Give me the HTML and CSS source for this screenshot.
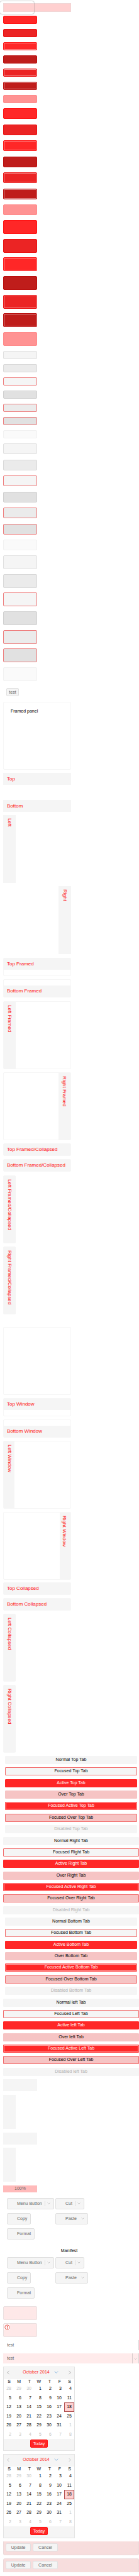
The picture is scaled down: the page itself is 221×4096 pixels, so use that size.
FILE: index.html
```html
<!DOCTYPE html>
<html lang="en">
<head>
<meta charset="utf-8">
<title>Theme widgets</title>
<link rel="stylesheet" href="styles.css">
</head>
<body>
<svg class="defs" aria-hidden="true">
  <symbol id="down" viewBox="0 0 10 6"><path d="M1 1l4 4 4-4" fill="none" stroke="currentColor" stroke-width="1.4"/></symbol>
  <symbol id="prev" viewBox="0 0 8 12"><path d="M7 1L1 6l6 5" fill="none" stroke="currentColor" stroke-width="1.4"/></symbol>
  <symbol id="next" viewBox="0 0 8 12"><path d="M1 1l6 5-6 5" fill="none" stroke="currentColor" stroke-width="1.4"/></symbol>
</svg>
<main class="page">
  <div class="highlight"><div class="halo"></div></div>

  <div class="stack small">
    <button class="btn red" aria-label="Normal"></button>
    <button class="btn red over" aria-label="Over"></button>
    <button class="btn red focus" aria-label="Focused"></button>
    <button class="btn red pressed" aria-label="Pressed"></button>
    <button class="btn red over focus" aria-label="Focused over"></button>
    <button class="btn red pressed focus" aria-label="Focused pressed"></button>
    <button class="btn red off" aria-label="Disabled" disabled></button>
  </div>
  <div class="stack medium">
    <button class="btn red" aria-label="Normal"></button>
    <button class="btn red over" aria-label="Over"></button>
    <button class="btn red focus" aria-label="Focused"></button>
    <button class="btn red pressed" aria-label="Pressed"></button>
    <button class="btn red over focus" aria-label="Focused over"></button>
    <button class="btn red pressed focus" aria-label="Focused pressed"></button>
    <button class="btn red off" aria-label="Disabled" disabled></button>
  </div>
  <div class="stack large">
    <button class="btn red" aria-label="Normal"></button>
    <button class="btn red over" aria-label="Over"></button>
    <button class="btn red focus" aria-label="Focused"></button>
    <button class="btn red pressed" aria-label="Pressed"></button>
    <button class="btn red over focus" aria-label="Focused over"></button>
    <button class="btn red pressed focus" aria-label="Focused pressed"></button>
    <button class="btn red off" aria-label="Disabled" disabled></button>
  </div>
  <div class="stack small">
    <button class="btn grey" aria-label="Normal"></button>
    <button class="btn grey over" aria-label="Over"></button>
    <button class="btn grey focus" aria-label="Focused"></button>
    <button class="btn grey pressed" aria-label="Pressed"></button>
    <button class="btn grey over focus" aria-label="Focused over"></button>
    <button class="btn grey pressed focus" aria-label="Focused pressed"></button>
    <button class="btn grey off" aria-label="Disabled" disabled></button>
  </div>
  <div class="stack medium">
    <button class="btn grey" aria-label="Normal"></button>
    <button class="btn grey over" aria-label="Over"></button>
    <button class="btn grey focus" aria-label="Focused"></button>
    <button class="btn grey pressed" aria-label="Pressed"></button>
    <button class="btn grey over focus" aria-label="Focused over"></button>
    <button class="btn grey pressed focus" aria-label="Focused pressed"></button>
    <button class="btn grey off" aria-label="Disabled" disabled></button>
  </div>
  <div class="stack large">
    <button class="btn grey" aria-label="Normal"></button>
    <button class="btn grey over" aria-label="Over"></button>
    <button class="btn grey focus" aria-label="Focused"></button>
    <button class="btn grey pressed" aria-label="Pressed"></button>
    <button class="btn grey over focus" aria-label="Focused over"></button>
    <button class="btn grey pressed focus" aria-label="Focused pressed"></button>
    <button class="btn grey off" aria-label="Disabled" disabled></button>
  </div>

  <button class="btn grey test">test</button>

  <section class="panels plain">
    <div class="panel framed tall note">Framed panel</div>
    <div class="panel top"><h2 class="bar">Top</h2><div class="body"></div></div>
    <div class="panel"><h2 class="bar">Bottom</h2></div>
    <div class="panel side tall"><h2 class="bar">Left</h2></div>
    <div class="panel side right tall"><h2 class="bar">Right</h2></div>
  </section>

  <section class="panels frames">
    <div class="panel framed short"><h2 class="bar">Top Framed</h2></div>
    <div class="panel framed short bottom"><h2 class="bar">Bottom Framed</h2></div>
    <div class="panel framed side tall"><h2 class="bar">Left Framed</h2></div>
    <div class="panel framed side right tall"><h2 class="bar">Right Framed</h2></div>
    <div class="panel framed"><h2 class="bar">Top Framed/Collapsed</h2></div>
    <div class="panel framed"><h2 class="bar">Bottom Framed/Collapsed</h2></div>
    <div class="panel framed side tall collapsed"><h2 class="bar">Left Framed/Collapsed</h2></div>
    <div class="panel framed side tall collapsed"><h2 class="bar">Right Framed/Collapsed</h2></div>
  </section>

  <section class="panels windows">
    <div class="panel framed tall"></div>
    <div class="panel framed short window"><h2 class="bar">Top Window</h2></div>
    <div class="panel framed short window bottom"><h2 class="bar">Bottom Window</h2></div>
    <div class="panel framed side tall window"><h2 class="bar">Left Window</h2></div>
    <div class="panel framed side right tall window"><h2 class="bar">Right Window</h2></div>
    <div class="panel framed"><h2 class="bar">Top Collapsed</h2></div>
    <div class="panel framed"><h2 class="bar">Bottom Collapsed</h2></div>
    <div class="panel framed side tall collapsed"><h2 class="bar">Left Collapsed</h2></div>
    <div class="panel framed side tall collapsed"><h2 class="bar">Right Collapsed</h2></div>
  </section>

  <section class="tabs">
    <button class="tab inset">Normal Top Tab</button>
    <button class="tab inset focus">Focused Top Tab</button>
    <button class="tab inset active">Active Top Tab</button>
    <button class="tab inset over">Over Top Tab</button>
    <button class="tab inset active focus">Focused Active Top Tab</button>
    <button class="tab inset over focus">Focused Over Top Tab</button>
    <button class="tab inset" disabled>Disabled Top Tab</button>
    <button class="tab">Normal Right Tab</button>
    <button class="tab focus">Focused Right Tab</button>
    <button class="tab active">Active Right Tab</button>
    <button class="tab over">Over Right Tab</button>
    <button class="tab active focus">Focused Active Right Tab</button>
    <button class="tab over focus">Focused Over Right Tab</button>
    <button class="tab" disabled>Disabled Right Tab</button>
    <button class="tab inset">Normal Bottom Tab</button>
    <button class="tab inset focus">Focused Bottom Tab</button>
    <button class="tab inset active">Active Bottom Tab</button>
    <button class="tab inset over">Over Bottom Tab</button>
    <button class="tab inset active focus">Focused Active Bottom Tab</button>
    <button class="tab inset over focus">Focused Over Bottom Tab</button>
    <button class="tab inset" disabled>Disabled Bottom Tab</button>
    <button class="tab">Normal left Tab</button>
    <button class="tab focus">Focused Left Tab</button>
    <button class="tab active">Active left Tab</button>
    <button class="tab over">Over left Tab</button>
    <button class="tab active focus">Focused Active Left Tab</button>
    <button class="tab over focus">Focused Over Left Tab</button>
    <button class="tab" disabled>Disabled left Tab</button>
  </section>

  <section class="strips">
    <div class="strip"></div>
    <div class="strip upright"></div>
    <div class="strip"></div>
    <div class="strip upright"></div>
    <div class="progress" role="progressbar" aria-valuenow="100">100%</div>
  </section>

  <section class="toolbar">
    <button class="btn grey tool">Menu Button<span class="split"></span><svg class="chev"><use href="#down"/></svg></button>
    <button class="btn grey tool">Cut<span class="split"></span><svg class="chev"><use href="#down"/></svg></button>
    <button class="btn grey tool">Copy</button>
    <button class="btn grey tool">Paste<svg class="chev lone"><use href="#down"/></svg></button>
    <button class="btn grey tool">Format</button>
  </section>
  <h3 class="caption">Manifest</h3>
  <section class="toolbar">
    <button class="btn grey tool">Menu Button<span class="split"></span><svg class="chev"><use href="#down"/></svg></button>
    <button class="btn grey tool">Cut<span class="split"></span><svg class="chev"><use href="#down"/></svg></button>
    <button class="btn grey tool">Copy</button>
    <button class="btn grey tool">Paste<svg class="chev lone"><use href="#down"/></svg></button>
    <button class="btn grey tool">Format</button>
  </section>

  <section class="forms">
    <div class="tip"></div>
    <div class="tip">
      <svg class="alert" viewBox="0 0 16 16"><path fill="#fff" d="M0 0h16v16H0z"/><circle cx="8" cy="8" r="6.5" fill="none" stroke="#e0281c" stroke-width="1.3"/><path d="M8 4v5M8 10.500v1.500" stroke="#e0281c" stroke-width="2"/></svg>
    </div>
    <div class="combo"><input type="text" value="test" aria-label="Plain field"></div>
    <div class="combo tinted"><input type="text" value="test" aria-label="Combo field"><button class="trigger" aria-label="Open"><svg class="chev"><use href="#down"/></svg></button></div>

    <div class="picker">
      <div class="month"><button class="arrow" aria-label="Previous"><svg><use href="#prev"/></svg></button><button class="name">October 2014<svg class="chev"><use href="#down"/></svg></button><button class="arrow" aria-label="Next"><svg><use href="#next"/></svg></button></div>
      <table>
        <thead><tr><th>S</th><th>M</th><th>T</th><th>W</th><th>T</th><th>F</th><th>S</th></tr></thead>
        <tbody>
        <tr><td class="dim">28</td><td class="dim">29</td><td class="dim">30</td><td>1</td><td>2</td><td>3</td><td>4</td></tr>
        <tr><td>5</td><td>6</td><td>7</td><td>8</td><td>9</td><td>10</td><td>11</td></tr>
        <tr><td>12</td><td>13</td><td>14</td><td>15</td><td>16</td><td>17</td><td class="today">18</td></tr>
        <tr><td>19</td><td>20</td><td>21</td><td>22</td><td>23</td><td>24</td><td>25</td></tr>
        <tr><td>26</td><td>27</td><td>28</td><td>29</td><td>30</td><td>31</td><td class="dim">1</td></tr>
        <tr><td class="dim">2</td><td class="dim">3</td><td class="dim">4</td><td class="dim">5</td><td class="dim">6</td><td class="dim">7</td><td class="dim">8</td></tr>
        </tbody>
      </table>
      <div class="foot"><button class="btn red now">Today</button></div>
    </div>
    <div class="picker faded">
      <div class="month"><button class="arrow" aria-label="Previous"><svg><use href="#prev"/></svg></button><button class="name">October 2014<svg class="chev"><use href="#down"/></svg></button><button class="arrow" aria-label="Next"><svg><use href="#next"/></svg></button></div>
      <table>
        <thead><tr><th>S</th><th>M</th><th>T</th><th>W</th><th>T</th><th>F</th><th>S</th></tr></thead>
        <tbody>
        <tr><td class="dim">28</td><td class="dim">29</td><td class="dim">30</td><td>1</td><td>2</td><td>3</td><td>4</td></tr>
        <tr><td>5</td><td>6</td><td>7</td><td>8</td><td>9</td><td>10</td><td>11</td></tr>
        <tr><td>12</td><td>13</td><td>14</td><td>15</td><td>16</td><td>17</td><td class="today">18</td></tr>
        <tr><td>19</td><td>20</td><td>21</td><td>22</td><td>23</td><td>24</td><td>25</td></tr>
        <tr><td>26</td><td>27</td><td>28</td><td>29</td><td>30</td><td>31</td><td class="dim">1</td></tr>
        <tr><td class="dim">2</td><td class="dim">3</td><td class="dim">4</td><td class="dim">5</td><td class="dim">6</td><td class="dim">7</td><td class="dim">8</td></tr>
        </tbody>
      </table>
      <div class="foot"><button class="btn red now">Today</button></div>
    </div>

    <div class="editor below"><button class="btn grey act">Update</button><button class="btn grey act">Cancel</button></div>
    <div class="editor above"><button class="btn grey act">Update</button><button class="btn grey act">Cancel</button></div>
  </section>
</main>
</body>
</html>
```

FILE: styles.css
```css
* { box-sizing: border-box; }
body {
  margin: 0;
  background: #fff;
  color: #000;
  font: 7px/8px "Liberation Sans", Arial, sans-serif;
}
button, input { font: inherit; margin: 0; padding: 0; border: 0; background: none; color: inherit; }
button { white-space: nowrap; }
h2, h3 { margin: 0; font-weight: normal; }
.defs { display: none; }
.page { padding: 5px 0 5px 5px; }

.highlight { width: 108px; height: 14px; margin-bottom: 6px; background: #ffd0d0; border: 1px solid #f0d6d6; }
.halo {
  position: absolute;
  left: 0;
  top: 2px;
  width: 54px;
  height: 20px;
  border-radius: 3px;
  box-shadow: 0 0 2px #777;
}

/* Button states */
.btn { display: block; border: 1px solid; border-radius: 2px; }
.red { background: #ff2727; border-color: #ff1414; color: #fff; }
.red.over { background: #eb2424; border-color: #ea1212; }
.red.pressed { background: #bf1d1b; border-color: #ba0f0e; }
.red.focus { box-shadow: inset 0 0 0 1px #ff8f8f; }
.red.over.focus { box-shadow: inset 0 0 0 1px #f58c8c; }
.red.pressed.focus { box-shadow: inset 0 0 0 1px #dd8a8a; }
.red.off { background: #ff9393; border-color: #ff8a8a; }
.grey { background: #f5f5f5; border-color: #e0e0e0; color: #666; }
.grey.over { background: #ebebeb; border-color: #d9d9d9; }
.grey.pressed { background: #e1e1e1; border-color: #d0d0d0; }
.grey.focus, .grey.over.focus, .grey.pressed.focus { border-color: #ee7c7c; }
.grey.off { background: #fafafa; border-color: #f1f1f1; }

.stack { display: grid; align-content: space-between; width: 54px; margin-bottom: 8px; }
.small { height: 139px; grid-auto-rows: 13px; }
.medium { height: 170px; grid-auto-rows: 17px; }
.large { height: 200px; grid-auto-rows: 22px; }
.test { width: 20px; height: 13px; margin: 11px 0 9px 5px; line-height: 9px; }

/* Panels */
.panels { display: flex; flex-direction: column; width: 108px; }
.plain { gap: 5px; margin-bottom: 6px; }
.frames { height: 567px; justify-content: space-between; margin-bottom: 20px; }
.windows { height: 677px; justify-content: space-between; margin-bottom: 5px; }
.panel { display: flex; flex-direction: column; }
.bar { height: 19px; padding: 5px 6px; background: #f5f5f5; color: #ff1010; font-size: 8px; line-height: 9px; white-space: nowrap; }
.body { height: 19px; }
.tall { height: 108px; }
.short { height: 29px; }
.note { padding: 10px 11px; }
.framed { border: 1px solid #f6f6f6; border-radius: 2px; }
.framed .bar { height: 18px; padding: 4px 5px; }
.bottom { justify-content: flex-end; }
.side { flex-direction: row; }
.side .bar, .framed.side .bar { writing-mode: vertical-rl; width: 20px; height: auto; padding: 5px 5px 5px 6px; }
.framed.side .bar { width: 19px; padding-left: 5px; }
.window.side .bar { width: 17px; padding-right: 3px; }
.window.side.right .bar { padding: 5px 5px 5px 3px; }
.right { justify-content: flex-end; }
.collapsed { width: 20px; }

/* Tabs */
.tabs { display: grid; height: 509px; align-content: space-between; grid-auto-rows: 13px; margin-bottom: 5px; }
.tab { padding-bottom: 1px; background: #f5f5f5; border: 1px solid #f5f5f5; border-radius: 1px; line-height: 10px; }
.inset { margin: 0 3px; }
.tab.active { background: #ff2727; border-color: #ff2727; color: #fff; }
.tab.over { background: #f6c4c4; border-color: #f6c4c4; }
.tab.focus { border-color: #f26a6a; }
.tab.active.focus { border-color: #ff4a4a; box-shadow: inset 0 0 0 1px #ff9a9a; }
.tab:disabled { color: #b0b0b0; }

.strips { display: flex; flex-direction: column; justify-content: space-between; height: 180px; margin-bottom: 9px; }
.strip { width: 54px; height: 19px; background: #f5f5f5; }
.upright { width: 20px; height: 54px; }
.progress { width: 54px; height: 11px; background: #ffbaba; color: #666; text-align: center; line-height: 10px; }

/* Toolbars */
.toolbar { display: grid; grid-template-columns: 77px 1fr; grid-auto-rows: 18px; row-gap: 6px; justify-items: start; margin-left: 6px; }
.tool { display: flex; align-items: center; padding: 0 5px 1px 15px; }
.split { width: 1px; height: 8px; margin: 0 3px 0 4px; background: #ddd; }
.chev { flex: none; width: 5px; height: 3px; color: #b4b4b4; }
.lone { margin-left: 7px; }
.caption { margin: 14px 6px 6px 0; text-align: center; font-size: 7px; }

/* Form parts */
.forms { display: flex; flex-direction: column; gap: 5px; margin-top: 12px; }
.tip { width: 54px; height: 22px; padding: 1px; background: #fee8e8; border: 1px solid #ebe0e0; border-radius: 2px; }
.alert { display: block; width: 9px; height: 9px; }
.combo { display: flex; height: 16px; border-right: 1px solid #d8d8d8; color: #666; }
.combo input { flex: 1; min-width: 0; padding: 0 6px; }
.tinted { background: #ffebeb; }
.trigger { display: grid; place-items: center; width: 10px; border-left: 1px solid #d8cccc; }

.picker { width: 114px; border: 1px solid #e4e4e4; }
.month, .foot { display: flex; background: #f5f5f5; }
.month { height: 19px; align-items: flex-start; justify-content: space-between; padding: 4px 5px; }
.arrow { color: #999; height: 9px; }
.faded .arrow { color: #b4b4b4; }
.arrow svg { display: block; width: 4px; height: 7px; }
.name { display: flex; align-items: center; gap: 7px; padding-left: 5px; color: #ff2727; }
.name .chev { width: 7px; height: 4px; color: #7fb2de; }
table { width: 100%; height: 95px; border-collapse: collapse; table-layout: fixed; }
th, td { padding: 0 4px 0 0; font-weight: normal; text-align: right; vertical-align: middle; }
th { padding-right: 5px; }
.dim { color: #c4c4c4; }
.today { background: #ffd0d0; box-shadow: inset 0 0 0 1px #b05050; }
.foot { height: 18px; justify-content: center; align-items: flex-start; padding-top: 1px; }
.now { width: 28px; height: 13px; line-height: 9px; }

.editor { display: flex; gap: 3px; height: 22px; padding: 3px; background: #f7dddd; border: 1px solid #ecdada; }
.below { border-top: 0; border-radius: 0 0 3px 3px; }
.above { border-bottom: 0; border-radius: 3px 3px 0 0; }
.act { width: 40px; height: 13px; line-height: 9px; }
```
